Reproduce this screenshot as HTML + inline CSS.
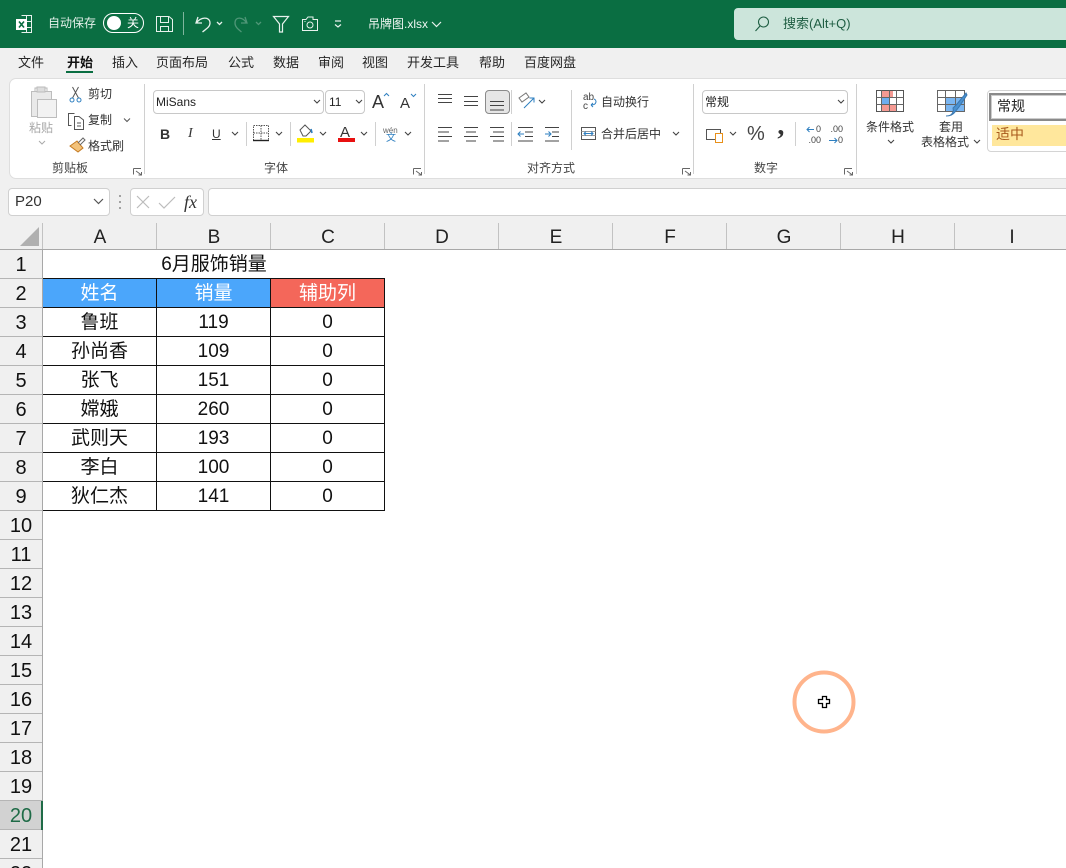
<!DOCTYPE html>
<html lang="zh"><head><meta charset="utf-8"><style>
html,body{margin:0;padding:0;background:#fff}
#p{position:relative;width:1066px;height:868px;overflow:hidden;background:#fff;font-family:"Liberation Sans","Noto Sans CJK SC",sans-serif;color:#262626}
#p div{position:absolute;white-space:nowrap}
svg{position:absolute;left:0;top:0}
.t{font-size:13px;line-height:18px;top:54px}
.r{font-size:12px;line-height:16px;color:#333}
.lb{font-size:12px;line-height:16px;top:160px;color:#444}
.ch{top:223px;height:26px;width:114px;text-align:center;font-size:19px;line-height:30px;color:#222}
.rh{left:0;width:42px;height:28px;text-align:center;font-size:20px;line-height:30px;color:#111;background:#f0f0f0;border-bottom:1px solid #b5b5b5}
.c{width:113px;height:28px;margin-top:2px;text-align:center;font-size:19px;line-height:28px;color:#111}
.box{background:#fff;border:1px solid #d0d0d0;border-radius:4px;box-sizing:border-box}
</style></head><body><div id="p">
<div style="left:0;top:0;width:1066px;height:48px;background:#0a6e42"></div>
<div style="left:0;top:48px;width:1066px;height:201px;background:#f0f0f0"></div>
<div style="left:9px;top:78px;width:1070px;height:101px;background:#fff;border:1px solid #dedede;border-radius:7px;box-sizing:border-box"></div>

<div style="left:48px;top:14px;font-size:12px;line-height:18px;color:#e4f0ea">自动保存</div>
<div style="left:103px;top:13px;width:41px;height:20px;border:1px solid #fff;border-radius:11px;box-sizing:border-box"></div>
<div style="left:107px;top:16px;width:14px;height:14px;background:#fff;border-radius:50%"></div>
<div style="left:127px;top:14px;font-size:12px;line-height:18px;color:#fff">关</div>
<div style="left:368px;top:15px;font-size:12px;line-height:18px;color:#f0f6f3">吊牌图.xlsx</div>
<svg width="1066" height="48" fill="none" stroke="#e8f2ed" stroke-width="1">
<path d="M21.500 15.500H31.500V32.500H21.500M21.500 21.500H31.500M21.500 27.500H31.500M26.500 15.500V32.500"/>
<rect x="16" y="19" width="11" height="11" fill="#fff" stroke="none"/><path d="M19 21.500L24 27.500M24 21.500L19 27.500" stroke="#0a6e42" stroke-width="1.600"/>
<path d="M156.500 16.500H169L172.500 19.500V31.500H156.500ZM160.500 16.500V22.500H168.500V16.500M160.500 31.500V26.500H168.500V31.500"/>
<path d="M183.500 12V35" stroke="#7fb59d"/>
<path d="M198 17L196 23H202M196.500 23C200 17 210 16 210 23C210 27 206 29 202.500 32" stroke-width="1.300"/>
<path d="M217 22L219.500 24.500L222 22" stroke-width="1.300"/>
<g stroke="#4f9677"><path d="M245 17L247 23H241M246.500 23C243 17 235 16 235 23C235 27 238 29 241.500 32" stroke-width="1.300"/><path d="M256 22L258.500 24.500L261 22" stroke-width="1.300"/></g>
<path d="M273.500 16.500H288.500L282.500 24V32H279.500V24Z" stroke-width="1.200"/>
<path d="M302.500 19.500H306L308 17H313V19.500H317.500V30.500H302.500Z"/><circle cx="310" cy="25" r="3"/><path d="M304.500 21.500H305.500"/>
<path d="M335 21H341M335 24.500L338 27L341 24.500" stroke-width="1.200"/>
<path d="M432 22L436.500 26.500L441 22" stroke-width="1.200"/>
</svg>

<div style="left:734px;top:8px;width:340px;height:32px;background:#cce5db;border-radius:4px"></div>
<div style="left:783px;top:15px;font-size:13px;line-height:18px;color:#1f5e43">搜索(Alt+Q)</div>
<svg width="1066" height="48" fill="none" stroke="#1f5e43" stroke-width="1.100"><circle cx="763.500" cy="22" r="5"/><path d="M760 26L755.500 31"/></svg>

<div class="t" style="left:18px">文件</div>
<div class="t" style="left:67px;font-weight:bold;color:#111">开始</div>
<div style="left:66px;top:71px;width:27px;height:2px;background:#0a6e42"></div>
<div class="t" style="left:112px">插入</div>
<div class="t" style="left:156px">页面布局</div>
<div class="t" style="left:228px">公式</div>
<div class="t" style="left:273px">数据</div>
<div class="t" style="left:318px">审阅</div>
<div class="t" style="left:362px">视图</div>
<div class="t" style="left:407px">开发工具</div>
<div class="t" style="left:479px">帮助</div>
<div class="t" style="left:524px">百度网盘</div>

<div class="r" style="left:29px;top:120px;color:#a8a8a8">粘贴</div>
<div class="r" style="left:88px;top:86px">剪切</div>
<div class="r" style="left:88px;top:112px">复制</div>
<div class="r" style="left:88px;top:138px">格式刷</div>
<div class="lb" style="left:52px">剪贴板</div>
<div class="lb" style="left:264px">字体</div>
<div class="lb" style="left:527px">对齐方式</div>
<div class="lb" style="left:754px">数字</div>

<div class="box" style="left:153px;top:90px;width:171px;height:24px;border-color:#c8c8c8"></div>
<div class="box" style="left:325px;top:90px;width:40px;height:24px;border-color:#c8c8c8"></div>
<div class="r" style="left:156px;top:94px;color:#222">MiSans</div>
<div class="r" style="left:329px;top:94px;color:#222">11</div>
<div style="left:160px;top:125px;font-size:14px;line-height:18px;font-weight:bold;color:#333">B</div>
<div style="left:188px;top:125px;font-size:14px;line-height:18px;font-style:italic;font-family:'Liberation Serif',serif;color:#333">I</div>
<div style="left:212px;top:126px;font-size:12px;line-height:16px;color:#333;text-decoration:underline">U</div>
<div style="left:372px;top:92px;font-size:18px;line-height:20px;color:#333">A</div>
<div style="left:400px;top:95px;font-size:15px;line-height:18px;color:#333">A</div>
<div style="left:340px;top:124px;font-size:15px;line-height:18px;color:#333">A</div>
<div style="left:383px;top:126px;font-size:8px;line-height:9px;color:#666">wén</div>
<div style="left:386px;top:133px;font-size:10px;line-height:12px;color:#2e7fc0">文</div>

<div style="left:485px;top:90px;width:25px;height:24px;background:#e6e6e6;border:1px solid #8a8a8a;border-radius:4px;box-sizing:border-box"></div>
<div class="r" style="left:601px;top:94px">自动换行</div>
<div class="r" style="left:601px;top:126px">合并后居中</div>
<div style="left:583px;top:93px;font-size:10px;line-height:9px;color:#444;width:12px;white-space:normal">ab<br>c</div>

<div class="box" style="left:702px;top:90px;width:146px;height:24px;border-color:#c8c8c8"></div>
<div class="r" style="left:705px;top:94px;color:#222">常规</div>
<div style="left:747px;top:122px;font-size:20px;line-height:24px;color:#444">%</div>
<div style="left:776px;top:126px;font-size:28px;line-height:30px;font-weight:bold;font-family:'Liberation Serif',serif;color:#333">’</div>
<div style="left:807px;top:124px;width:14px;text-align:right;font-size:9px;line-height:11px;color:#444;white-space:pre">0
.00</div>
<div style="left:829px;top:124px;width:14px;text-align:right;font-size:9px;line-height:11px;color:#444;white-space:pre">.00
0</div>

<div class="r" style="left:866px;top:119px">条件格式</div>
<div class="r" style="left:939px;top:119px">套用</div>
<div class="r" style="left:921px;top:134px">表格格式</div>

<div style="left:987px;top:90px;width:90px;height:62px;background:#fff;border:1px solid #d4d4d4;border-radius:4px;box-sizing:border-box"></div>
<div style="left:989px;top:93px;width:90px;height:28px;background:#fff;border:2px solid #8a8a8a;box-shadow:inset 0 0 0 1px #ccc;box-sizing:border-box"></div>
<div style="left:997px;top:96px;font-size:14px;line-height:20px;color:#222">常规</div>
<div style="left:992px;top:125px;width:80px;height:21px;background:#ffe79c"></div>
<div style="left:996px;top:124px;font-size:14px;line-height:20px;color:#a8591c">适中</div>

<svg width="1066" height="180" fill="none" stroke="#555" stroke-width="1">
<g stroke="#d0d0d0"><path d="M144.500 84V174M424.500 84V174M693.500 84V174M856.500 84V174M246.500 122V146M290.500 122V146M375.500 122V146M511.500 90V114M511.500 122V146M571.500 90V150M795.500 122V146"/></g>
<path d="M35 93V88H47V93" stroke="#b8b8b8"/><path d="M31.500 91.500H51.500V116.500H31.500Z" fill="#e9e9e9" stroke="#bdbdbd"/><rect x="37.500" y="99.500" width="19" height="18" fill="#f2f2f2" stroke="#bdbdbd"/><rect x="37" y="87" width="8" height="5" fill="#ddd" stroke="#bbb"/>
<path d="M39 141L42 144L45 141" stroke="#aaa"/>
<path d="M72.500 87L78.500 98M78.500 87L72.500 98" stroke="#555"/><circle cx="72" cy="100" r="2" stroke="#2e7fc0"/><circle cx="79" cy="100" r="2" stroke="#2e7fc0"/>
<path d="M71.500 125.500H68.500V113.500H74.500M74.500 116.500H79L83.500 120V129.500H74.500ZM77 123H81M77 126H81"/>
<path d="M124 118.500L127 121.500L130 118.500"/>
<path d="M70 146L77 141L83 148L78 152Z" fill="#f3c27a" stroke="#c47a22"/><path d="M78 143L83 138L85 140L80 145" stroke="#666"/>
<g stroke="#666"><path d="M133.500 168.500H141M133.500 168.500V174.500M136 171L141.500 175M141.500 172V175H138.500"/>
<path d="M413.500 168.500H421M413.500 168.500V174.500M416 171L421.500 175M421.500 172V175H418.500"/>
<path d="M682.500 168.500H690M682.500 168.500V174.500M685 171L690.500 175M690.500 172V175H687.500"/>
<path d="M844.500 168.500H852M844.500 168.500V174.500M847 171L852.500 175M852.500 172V175H849.500"/></g>
<g stroke="#444" stroke-width="1.100"><path d="M314 100L317 103L320 100M356 100L359 103L362 100M232 132L235 135L238 132M276 132L279 135L282 132M320 132L323 135L326 132M361 132L364 135L367 132M405 132L408 135L411 132M539 100L542 103L545 100M673 132L676 135L679 132M838 100L841 103L844 100M730 132L733 135L736 132M888 140L891 143L894 140M974 140L977 143L980 140"/></g>
<path d="M384 96L386.500 93.500L389 96M411 94L413.500 96.500L416 94" stroke="#2e7fc0"/>
<path d="M253.500 125.500H268.500V140.500H253.500ZM261 125.500V140.500M253.500 133H268.500" stroke="#555" stroke-dasharray="1.500 1"/><path d="M253 140.500H269" stroke="#222" stroke-width="1.400"/>
<rect x="297" y="138" width="17" height="4.500" fill="#ffee00" stroke="none"/><path d="M300 130L305 125L311 131L306 136H303Z" stroke="#555"/><path d="M311 129L312 133" stroke="#2e7fc0" stroke-width="1.600"/>
<rect x="338" y="138" width="17" height="4" fill="#e81010" stroke="none"/>
<g stroke="#444"><path d="M438 94.500H452M438 98.500H452M438 102.500H452M464 96.500H478M464 101.500H478M464 105.500H478M490 101.500H504M490 105.500H504M490 110H504"/>
<path d="M438 127.500H452M438 132H449M438 136.500H452M438 141H449M464 127.500H478M466 132H476M464 136.500H478M466 141H476M490 127.500H504M493 132H504M490 136.500H504M493 141H504"/>
<path d="M525 132H533M525 136.500H533M518 141H533M545 127.500H559M552 132H559M552 136.500H559M545 141H559M518 127.500H533"/></g>
<path d="M524 134H518M520.500 131.500L518 134L520.500 136.500M545 134H551M548.500 131.500L551 134L548.500 136.500" stroke="#2e7fc0"/>
<path d="M524 108L534 98M529.500 98H534V102.500" stroke="#2e7fc0"/><path d="M519 98L526 93L529 97L522 102Z" stroke="#777"/>
<path d="M591 105C597 105 597 100 594 99M591 105L593 103M591 105L593 107" stroke="#2e7fc0"/>
<rect x="581.500" y="127.500" width="14" height="12" stroke="#555"/><path d="M581.500 131.500H595.500M581.500 135.500H595.500" stroke="#9a9a9a"/><path d="M584 133.500H593M586 131.500L584 133.500L586 135.500M591 131.500L593 133.500L591 135.500" stroke="#2e7fc0"/>
<rect x="706.500" y="129.500" width="14" height="10" stroke="#555"/><rect x="715.500" y="133.500" width="7" height="9" fill="#fff" stroke="#e8901a"/>
<path d="M807 129.500H814M809.500 127L807 129.500L809.500 132M829 140.500H837M834.500 138L837 140.500L834.500 143" stroke="#2e7fc0"/>
<g stroke="#555"><rect x="876.500" y="90.500" width="27" height="21"/></g>
<rect x="881" y="91" width="12" height="6" fill="#f59a93" stroke="none"/><rect x="881" y="98" width="8" height="6" fill="#6eaef0" stroke="none"/><rect x="881" y="105" width="15" height="6" fill="#f59a93" stroke="none"/>
<path d="M876.500 97.500H903.500M876.500 104.500H903.500M881.500 90.500V111.500M889.500 90.500V111.500M896.500 90.500V111.500" stroke="#666"/>
<rect x="945" y="97" width="19" height="14" fill="#7ab6f2" stroke="none"/>
<path d="M937.500 90.500H964.500V111.500H937.500ZM937.500 97.500H964.500M937.500 104.500H964.500M945.500 90.500V111.500M955.500 90.500V111.500" stroke="#666"/>
<path d="M946 116C952 116 954 112 953 108L957 104L966 93L967 95L959 107L955 112C953 115 950 116 946 116Z" fill="#4a90d0" stroke="#3a78b0"/>
</svg>

<div class="box" style="left:8px;top:188px;width:102px;height:28px"></div>
<div style="left:15px;top:193px;font-size:15px;line-height:18px;color:#333">P20</div>
<div class="box" style="left:130px;top:188px;width:74px;height:28px"></div>
<div class="box" style="left:208px;top:188px;width:870px;height:28px"></div>
<div style="left:184px;top:191px;font-size:18px;line-height:22px;font-style:italic;font-family:'Liberation Serif',serif;color:#333">fx</div>
<svg width="1066" height="250" fill="none" stroke="#555">
<path d="M94 199L98.500 203.500L103 199" stroke-width="1.200"/>
<path d="M120 195V197M120 201V203M120 207V209" stroke="#888" stroke-width="1.500"/>
<path d="M137 196L149 208M149 196L137 208" stroke="#bcbcbc" stroke-width="1.200"/>
<path d="M159 203L164 208L175 197" stroke="#bcbcbc" stroke-width="1.200"/>
<path d="M39 227V246H20Z" fill="#b0b0b0" stroke="none"/>
<path d="M42.500 223V249M156.500 223V249M270.500 223V249M384.500 223V249M498.500 223V249M612.500 223V249M726.500 223V249M840.500 223V249M954.500 223V249" stroke="#c2c2c2"/>
<path d="M0 249.500H1066" stroke="#a8a8a8"/>
</svg>
<div class="ch" style="left:43px">A</div>
<div class="ch" style="left:157px">B</div>
<div class="ch" style="left:271px">C</div>
<div class="ch" style="left:385px">D</div>
<div class="ch" style="left:499px">E</div>
<div class="ch" style="left:613px">F</div>
<div class="ch" style="left:727px">G</div>
<div class="ch" style="left:841px">H</div>
<div class="ch" style="left:955px">I</div>

<div class="rh" style="top:250px">1</div>
<div class="rh" style="top:279px">2</div>
<div class="rh" style="top:308px">3</div>
<div class="rh" style="top:337px">4</div>
<div class="rh" style="top:366px">5</div>
<div class="rh" style="top:395px">6</div>
<div class="rh" style="top:424px">7</div>
<div class="rh" style="top:453px">8</div>
<div class="rh" style="top:482px">9</div>
<div class="rh" style="top:511px">10</div>
<div class="rh" style="top:540px">11</div>
<div class="rh" style="top:569px">12</div>
<div class="rh" style="top:598px">13</div>
<div class="rh" style="top:627px">14</div>
<div class="rh" style="top:656px">15</div>
<div class="rh" style="top:685px">16</div>
<div class="rh" style="top:714px">17</div>
<div class="rh" style="top:743px">18</div>
<div class="rh" style="top:772px">19</div>
<div class="rh" style="top:801px;background:#d2d2d2;color:#1f6b47">20</div>
<div class="rh" style="top:830px">21</div>
<div class="rh" style="top:859px">22</div>
<div style="left:42px;top:250px;width:1px;height:618px;background:#a8a8a8"></div>
<div style="left:41px;top:801px;width:2px;height:29px;background:#1f6b47"></div>

<div style="left:43px;top:279px;width:228px;height:29px;background:#4ba6fb"></div>
<div style="left:271px;top:279px;width:114px;height:29px;background:#f4675a"></div>
<svg width="1066" height="868" fill="none" stroke="#111" stroke-width="1" style="z-index:2">
<path d="M43 278.500H385M43 307.500H385M43 336.500H385M43 365.500H385M43 394.500H385M43 423.500H385M43 452.500H385M43 481.500H385M43 510.500H385M156.500 279V511M270.500 279V511M384.500 279V511"/>
<circle cx="824" cy="702" r="29.500" stroke="#ffb48c" stroke-width="4"/>
<path d="M822.500 696.500H826.500V699.500H829.500V703.500H826.500V707.500H822.500V703.500H818.500V699.500H822.500Z" fill="#fff" stroke="#000" stroke-width="1.300"/>
</svg>

<div class="c" style="left:157px;top:249px;width:114px">6月服饰销量</div>
<div class="c" style="left:43px;top:278px;color:#fff">姓名</div>
<div class="c" style="left:157px;top:278px;color:#fff">销量</div>
<div class="c" style="left:271px;top:278px;color:#fff">辅助列</div>
<div class="c" style="left:43px;top:307px">鲁班</div><div class="c" style="left:157px;top:307px">119</div><div class="c" style="left:271px;top:307px">0</div>
<div class="c" style="left:43px;top:336px">孙尚香</div><div class="c" style="left:157px;top:336px">109</div><div class="c" style="left:271px;top:336px">0</div>
<div class="c" style="left:43px;top:365px">张飞</div><div class="c" style="left:157px;top:365px">151</div><div class="c" style="left:271px;top:365px">0</div>
<div class="c" style="left:43px;top:394px">嫦娥</div><div class="c" style="left:157px;top:394px">260</div><div class="c" style="left:271px;top:394px">0</div>
<div class="c" style="left:43px;top:423px">武则天</div><div class="c" style="left:157px;top:423px">193</div><div class="c" style="left:271px;top:423px">0</div>
<div class="c" style="left:43px;top:452px">李白</div><div class="c" style="left:157px;top:452px">100</div><div class="c" style="left:271px;top:452px">0</div>
<div class="c" style="left:43px;top:481px">狄仁杰</div><div class="c" style="left:157px;top:481px">141</div><div class="c" style="left:271px;top:481px">0</div>
</div></body></html>
